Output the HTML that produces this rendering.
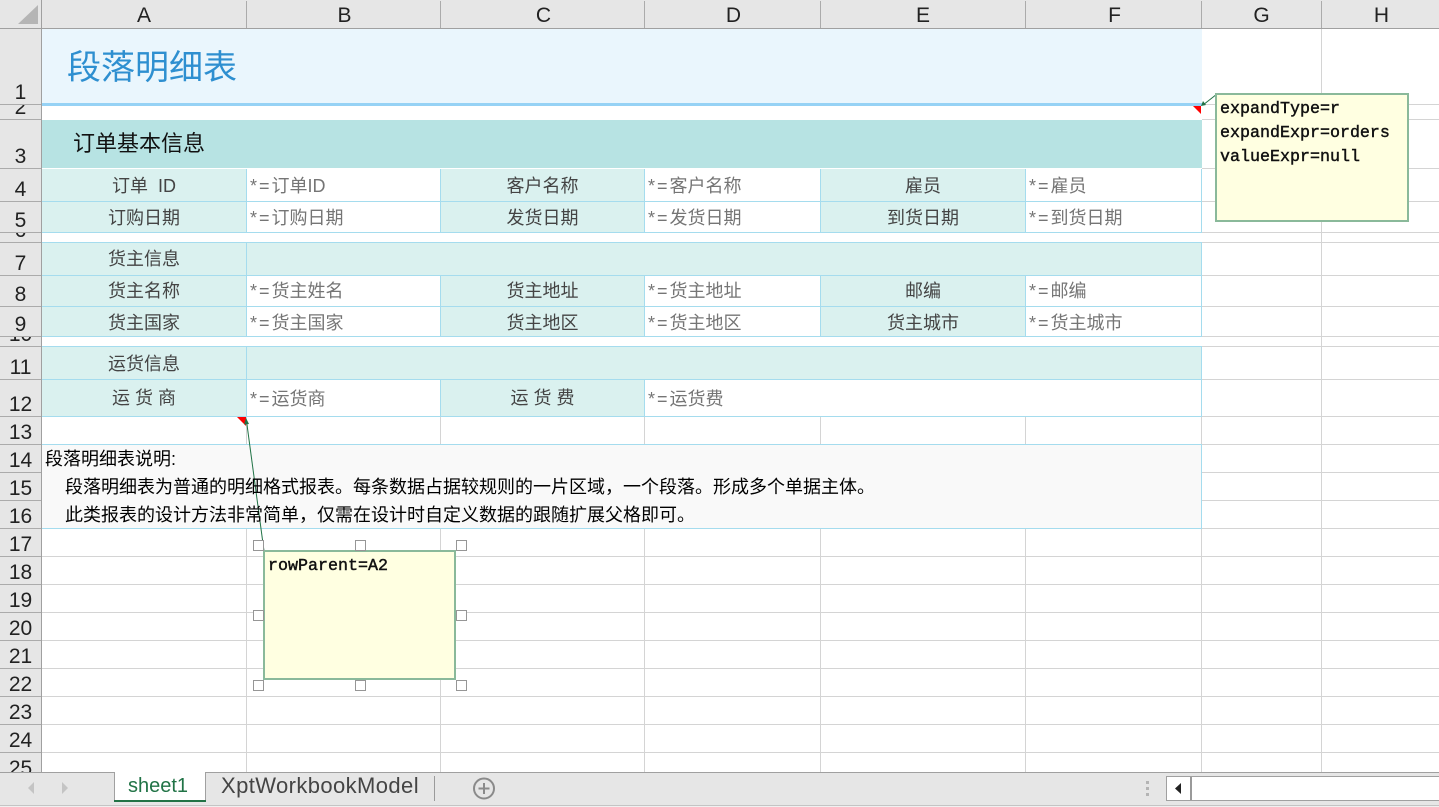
<!DOCTYPE html>
<html lang="zh">
<head>
<meta charset="utf-8">
<title>段落明细表</title>
<style>
html,body{margin:0;padding:0;background:#fff}
#p{position:relative;width:1439px;height:807px;overflow:hidden;background:#fff;font-family:"Liberation Sans","Noto Sans CJK SC",sans-serif}
svg{position:absolute;left:0;top:0}
.t{position:absolute;white-space:pre;font-size:18px;line-height:26px;height:26px}
.l{color:#444;text-align:center}
.v{color:#757575}
.v i{font-style:normal;letter-spacing:2px}
.n{color:#000}
.h{position:absolute;top:3px;height:25px;line-height:26px;text-align:center;font-size:21px;color:#222}
.r{position:absolute;left:0;width:41px;overflow:hidden}
.r span{position:absolute;left:0;width:41px;text-align:center;bottom:1px;font-size:21px;line-height:20px;color:#222}
.c{position:absolute;font-family:"Liberation Mono","DejaVu Sans Mono",monospace;font-weight:normal;-webkit-text-stroke:.45px #111;font-size:16.67px;line-height:24px;color:#111;white-space:pre}
</style>
</head>
<body>
<div id="p">
<svg width="1439" height="807" viewBox="0 0 1439 807" shape-rendering="crispEdges">
<!-- header backgrounds -->
<rect x="0" y="0" width="1439" height="28" fill="#e6e6e6"/>
<rect x="0" y="0" width="41" height="772" fill="#e6e6e6"/>
<!-- fills -->
<rect x="42" y="29" width="1160" height="74" fill="#eaf6fd"/>
<rect x="42" y="120" width="1160" height="48" fill="#b7e3e3"/>
<rect x="42" y="169" width="204" height="63" fill="#daf1ef"/>
<rect x="441" y="169" width="203" height="63" fill="#daf1ef"/>
<rect x="821" y="169" width="204" height="63" fill="#daf1ef"/>
<rect x="42" y="243" width="1160" height="32" fill="#daf1ef"/>
<rect x="42" y="276" width="204" height="60" fill="#daf1ef"/>
<rect x="441" y="276" width="203" height="60" fill="#daf1ef"/>
<rect x="821" y="276" width="204" height="60" fill="#daf1ef"/>
<rect x="42" y="347" width="1160" height="32" fill="#daf1ef"/>
<rect x="42" y="380" width="204" height="36" fill="#daf1ef"/>
<rect x="441" y="380" width="203" height="36" fill="#daf1ef"/>
<rect x="42" y="445" width="1160" height="83" fill="#f9f9f9"/>
<!-- gray grid -->
<path stroke="#d4d4d4" stroke-width="1" fill="none" d="
M1321.5 29V772
M246.5 417V444M440.5 417V444M644.5 417V444M820.5 417V444M1025.5 417V444M1201.5 417V444
M246.5 529V772M440.5 529V772M644.5 529V772M820.5 529V772M1025.5 529V772M1201.5 529V772
M1202 104.5H1439M1202 119.5H1439M1202 168.5H1439M1202 201.5H1439M1202 232.5H1439M1202 242.5H1439M1202 275.5H1439M1202 306.5H1439M1202 336.5H1439M1202 346.5H1439M1202 379.5H1439M1202 416.5H1439M1202 444.5H1439M1202 472.5H1439M1202 500.5H1439M1202 528.5H1439
M42 556.5H1439M42 584.5H1439M42 612.5H1439M42 640.5H1439M42 668.5H1439M42 696.5H1439M42 724.5H1439M42 752.5H1439"/>
<!-- blue cell borders -->
<path stroke="#a5dcee" stroke-width="1" fill="none" d="
M246.5 169V232M440.5 169V232M644.5 169V232M820.5 169V232M1025.5 169V232M1201.5 169V232
M246.5 243V275M1201.5 243V275
M246.5 276V336M440.5 276V336M644.5 276V336M820.5 276V336M1025.5 276V336M1201.5 276V336
M246.5 347V379M1201.5 347V379
M246.5 380V416M440.5 380V416M644.5 380V416M1201.5 380V416
M1201.5 445V528
M42 201.5H1202M42 232.5H1202M42 242.5H1202M42 275.5H1202M42 306.5H1202M42 336.5H1202M42 346.5H1202M42 379.5H1202M42 416.5H1202M42 444.5H1202M42 528.5H1202"/>
<rect x="42" y="103" width="1160" height="3" fill="#96d2f5"/>
<!-- header lines -->
<path stroke="#ababab" stroke-width="1" fill="none" d="
M246.5 1V28M440.5 1V28M644.5 1V28M820.5 1V28M1025.5 1V28M1201.5 1V28M1321.5 1V28
M0 104.5H41M0 119.5H41M0 168.5H41M0 201.5H41M0 232.5H41M0 242.5H41M0 275.5H41M0 306.5H41M0 336.5H41M0 346.5H41M0 379.5H41M0 416.5H41M0 444.5H41M0 472.5H41M0 500.5H41M0 528.5H41M0 556.5H41M0 584.5H41M0 612.5H41M0 640.5H41M0 668.5H41M0 696.5H41M0 724.5H41M0 752.5H41"/>
<rect x="0" y="28" width="1439" height="1" fill="#a0a0a0"/>
<rect x="41" y="0" width="1" height="772" fill="#a0a0a0"/>
<polygon points="18,24 38,24 38,5" fill="#b5b5b5" shape-rendering="auto"/>
<!-- comment triangles -->
<polygon points="1193,106 1201,106 1201,114" fill="#ff0000" shape-rendering="auto"/>
<polygon points="237,417 246,417 246,426" fill="#ff0000" shape-rendering="auto"/>
<!-- connectors -->
<g shape-rendering="auto">
<path d="M1217 94L1203 105" stroke="#217346" stroke-width="1" fill="none"/>
<polygon points="1201,106 1203,101 1206,105" fill="#217346"/>
<path d="M264 551L246.500 421" stroke="#217346" stroke-width="1" fill="none"/>
<polygon points="246,418 249,424 244,424.500" fill="#217346"/>
</g>
<!-- comment boxes -->
<rect x="1216" y="94" width="192" height="127" fill="#ffffe1" stroke="#8ab99a" stroke-width="2"/>
<rect x="264" y="551" width="191" height="128" fill="#ffffe1" stroke="#8ab99a" stroke-width="2"/>
<!-- handles -->
<g fill="#fff" stroke="#969696" stroke-width="1">
<rect x="253.500" y="540.500" width="10" height="10"/>
<rect x="355.500" y="540.500" width="10" height="10"/>
<rect x="456.500" y="540.500" width="10" height="10"/>
<rect x="253.500" y="610.500" width="10" height="10"/>
<rect x="456.500" y="610.500" width="10" height="10"/>
<rect x="253.500" y="680.500" width="10" height="10"/>
<rect x="355.500" y="680.500" width="10" height="10"/>
<rect x="456.500" y="680.500" width="10" height="10"/>
</g>
</svg>

<!-- column headers -->
<div class="h" style="left:42px;width:204px">A</div>
<div class="h" style="left:248px;width:193px">B</div>
<div class="h" style="left:442px;width:203px">C</div>
<div class="h" style="left:646px;width:175px">D</div>
<div class="h" style="left:821px;width:204px">E</div>
<div class="h" style="left:1027px;width:175px">F</div>
<div class="h" style="left:1202px;width:119px">G</div>
<div class="h" style="left:1323px;width:117px">H</div>

<!-- row headers -->
<div class="r" style="top:29px;height:75px"><span>1</span></div>
<div class="r" style="top:105px;height:14px"><span>2</span></div>
<div class="r" style="top:120px;height:48px"><span>3</span></div>
<div class="r" style="top:169px;height:32px"><span>4</span></div>
<div class="r" style="top:202px;height:30px"><span>5</span></div>
<div class="r" style="top:233px;height:9px"><span>6</span></div>
<div class="r" style="top:243px;height:32px"><span>7</span></div>
<div class="r" style="top:276px;height:30px"><span>8</span></div>
<div class="r" style="top:307px;height:29px"><span>9</span></div>
<div class="r" style="top:337px;height:9px"><span>10</span></div>
<div class="r" style="top:347px;height:32px"><span>11</span></div>
<div class="r" style="top:380px;height:36px"><span>12</span></div>
<div class="r" style="top:417px;height:27px"><span>13</span></div>
<div class="r" style="top:445px;height:27px"><span>14</span></div>
<div class="r" style="top:473px;height:27px"><span>15</span></div>
<div class="r" style="top:501px;height:27px"><span>16</span></div>
<div class="r" style="top:529px;height:27px"><span>17</span></div>
<div class="r" style="top:557px;height:27px"><span>18</span></div>
<div class="r" style="top:585px;height:27px"><span>19</span></div>
<div class="r" style="top:613px;height:27px"><span>20</span></div>
<div class="r" style="top:641px;height:27px"><span>21</span></div>
<div class="r" style="top:669px;height:27px"><span>22</span></div>
<div class="r" style="top:697px;height:27px"><span>23</span></div>
<div class="r" style="top:725px;height:27px"><span>24</span></div>
<div class="r" style="top:753px;height:19px"><span style="bottom:-7px">25</span></div>

<!-- title + section -->
<div class="t" style="left:67px;top:46px;height:44px;line-height:44px;font-size:34px;color:#2e8fd0">段落明细表</div>
<div class="t" style="left:73px;top:128px;height:32px;line-height:32px;font-size:22px;color:#111">订单基本信息</div>

<!-- rows 4,5 -->
<div class="t l" style="left:42px;top:173px;width:204px">订单&nbsp;&nbsp;ID</div>
<div class="t v" style="left:250px;top:173px"><i>*=</i>订单ID</div>
<div class="t l" style="left:441px;top:173px;width:203px">客户名称</div>
<div class="t v" style="left:648px;top:173px"><i>*=</i>客户名称</div>
<div class="t l" style="left:821px;top:173px;width:204px">雇员</div>
<div class="t v" style="left:1029px;top:173px"><i>*=</i>雇员</div>
<div class="t l" style="left:42px;top:205px;width:204px">订购日期</div>
<div class="t v" style="left:250px;top:205px"><i>*=</i>订购日期</div>
<div class="t l" style="left:441px;top:205px;width:203px">发货日期</div>
<div class="t v" style="left:648px;top:205px"><i>*=</i>发货日期</div>
<div class="t l" style="left:821px;top:205px;width:204px">到货日期</div>
<div class="t v" style="left:1029px;top:205px"><i>*=</i>到货日期</div>

<!-- rows 7-9 -->
<div class="t l" style="left:42px;top:246px;width:204px">货主信息</div>
<div class="t l" style="left:42px;top:278px;width:204px">货主名称</div>
<div class="t v" style="left:250px;top:278px"><i>*=</i>货主姓名</div>
<div class="t l" style="left:441px;top:278px;width:203px">货主地址</div>
<div class="t v" style="left:648px;top:278px"><i>*=</i>货主地址</div>
<div class="t l" style="left:821px;top:278px;width:204px">邮编</div>
<div class="t v" style="left:1029px;top:278px"><i>*=</i>邮编</div>
<div class="t l" style="left:42px;top:310px;width:204px">货主国家</div>
<div class="t v" style="left:250px;top:310px"><i>*=</i>货主国家</div>
<div class="t l" style="left:441px;top:310px;width:203px">货主地区</div>
<div class="t v" style="left:648px;top:310px"><i>*=</i>货主地区</div>
<div class="t l" style="left:821px;top:310px;width:204px">货主城市</div>
<div class="t v" style="left:1029px;top:310px"><i>*=</i>货主城市</div>

<!-- rows 11,12 -->
<div class="t l" style="left:42px;top:351px;width:204px">运货信息</div>
<div class="t l" style="left:42px;top:385px;width:204px">运 货 商</div>
<div class="t v" style="left:250px;top:386px"><i>*=</i>运货商</div>
<div class="t l" style="left:441px;top:385px;width:203px">运 货 费</div>
<div class="t v" style="left:648px;top:386px"><i>*=</i>运货费</div>

<!-- notes -->
<div class="t n" style="left:45px;top:446px">段落明细表说明:</div>
<div class="t n" style="left:65px;top:474px">段落明细表为普通的明细格式报表。每条数据占据较规则的一片区域，一个段落。形成多个单据主体。</div>
<div class="t n" style="left:65px;top:502px">此类报表的设计方法非常简单，仅需在设计时自定义数据的跟随扩展父格即可。</div>

<!-- comments -->
<div class="c" style="left:1220px;top:98px">expandType=r
expandExpr=orders
valueExpr=null</div>
<div class="c" style="left:268px;top:555px">rowParent=A2</div>

<!-- bottom bar -->
<svg width="1439" height="807" viewBox="0 0 1439 807" shape-rendering="crispEdges">
<rect x="0" y="772" width="1439" height="35" fill="#e6e6e6"/>
<rect x="0" y="772" width="1439" height="1" fill="#a0a0a0"/>
<rect x="0" y="805" width="1439" height="1" fill="#c4c4c4"/>
<rect x="0" y="806" width="1439" height="1" fill="#f0f0f0"/>
<rect x="114" y="772" width="92" height="30" fill="#fff"/>
<rect x="114" y="772" width="1" height="30" fill="#a0a0a0"/>
<rect x="205" y="772" width="1" height="30" fill="#a0a0a0"/>
<rect x="114" y="800" width="92" height="2" fill="#217346"/>
<rect x="434" y="776" width="1" height="25" fill="#9a9a9a"/>
<g shape-rendering="auto">
<polygon points="34,782 34,794 28,788" fill="#c4c4c4"/>
<polygon points="62,782 62,794 68,788" fill="#c4c4c4"/>
<circle cx="484" cy="788.500" r="10" fill="none" stroke="#8a8a8a" stroke-width="2"/>
<path d="M484 783V794M478.500 788.500H489.500" stroke="#8a8a8a" stroke-width="2" fill="none"/>
</g>
<rect x="1146" y="781" width="3" height="3" fill="#b4b4b4"/>
<rect x="1146" y="787" width="3" height="3" fill="#b4b4b4"/>
<rect x="1146" y="793" width="3" height="3" fill="#b4b4b4"/>
<rect x="1166.500" y="776.500" width="280" height="24" fill="#fff" stroke="#a0a0a0" stroke-width="1"/>
<rect x="1190" y="777" width="2" height="23" fill="#9a9a9a"/>
<polygon points="1181,783 1181,794 1175,788.500" fill="#222" shape-rendering="auto"/>
</svg>
<div class="t" style="left:128px;top:773px;font-size:20px;color:#217346">sheet1</div>
<div class="t" style="left:221px;top:773px;font-size:22px;letter-spacing:.4px;color:#444">XptWorkbookModel</div>
</div>
</body>
</html>
